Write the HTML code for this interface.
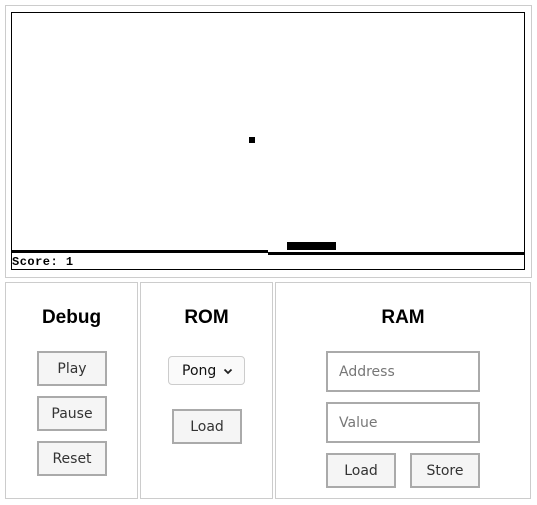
<!DOCTYPE html>
<html><head><style>
body{margin:0;width:537px;height:505px;background:#fff;position:relative;font-family:"DejaVu Sans","Liberation Sans",sans-serif;overflow:hidden}
.a{position:absolute;box-sizing:border-box}
.p{border:1px solid #ccc}
.b{border:2px solid #aaa;background:#f5f5f5;font-size:14px;color:#333;text-align:center}
.h{font-family:"Liberation Sans",sans-serif;font-weight:bold;font-size:19px;text-align:center;color:#000}
.i{border:2px solid #aaa;background:#fff;font-size:14px;color:#777;padding-left:11px}
</style></head><body>
<div class="a p" style="left:5px;top:5px;width:527px;height:273px"></div>
<div class="a" style="left:11px;top:12px;width:514px;height:258px;border:1px solid #000"></div>
<div class="a" style="left:249px;top:137px;width:6px;height:6px;background:#000"></div>
<div class="a" style="left:287px;top:242px;width:49px;height:8px;background:#000"></div>
<div class="a" style="left:11px;top:250px;width:257px;height:3px;background:#000"></div>
<div class="a" style="left:268px;top:252px;width:257px;height:3px;background:#000"></div>
<div class="a" style="left:12px;top:255px;font:bold 12px 'Liberation Mono',monospace;letter-spacing:0.5px">Score: 1</div>

<div class="a p" style="left:5px;top:282px;width:133px;height:217px"></div>
<div class="a p" style="left:140px;top:282px;width:133px;height:217px"></div>
<div class="a p" style="left:275px;top:282px;width:256px;height:217px"></div>
<div class="a h" style="left:5px;top:307px;width:133px">Debug</div>
<div class="a h" style="left:140px;top:307px;width:133px">ROM</div>
<div class="a h" style="left:275px;top:307px;width:256px">RAM</div>

<div class="a b" style="left:37px;top:351px;width:70px;height:35px;line-height:33px">Play</div>
<div class="a b" style="left:37px;top:396px;width:70px;height:35px;line-height:33px">Pause</div>
<div class="a b" style="left:37px;top:441px;width:70px;height:35px;line-height:33px">Reset</div>

<div class="a" style="left:168px;top:356px;width:77px;height:29px;border:1px solid #ccc;border-radius:4px;background:#fafafa;font-size:14px;line-height:29px;padding-left:13px;color:#111">Pong<svg style="position:absolute;left:54px;top:11px" width="10" height="7" viewBox="0 0 10 7"><path d="M1.5 1.5L5 5L8.5 1.5" fill="none" stroke="#222" stroke-width="1.8"/></svg></div>
<div class="a b" style="left:172px;top:409px;width:70px;height:35px;line-height:33px">Load</div>

<div class="a i" style="left:326px;top:351px;width:154px;height:41px;line-height:39px">Address</div>
<div class="a i" style="left:326px;top:402px;width:154px;height:41px;line-height:39px">Value</div>
<div class="a b" style="left:326px;top:453px;width:70px;height:35px;line-height:33px">Load</div>
<div class="a b" style="left:410px;top:453px;width:70px;height:35px;line-height:33px">Store</div>
</body></html>
